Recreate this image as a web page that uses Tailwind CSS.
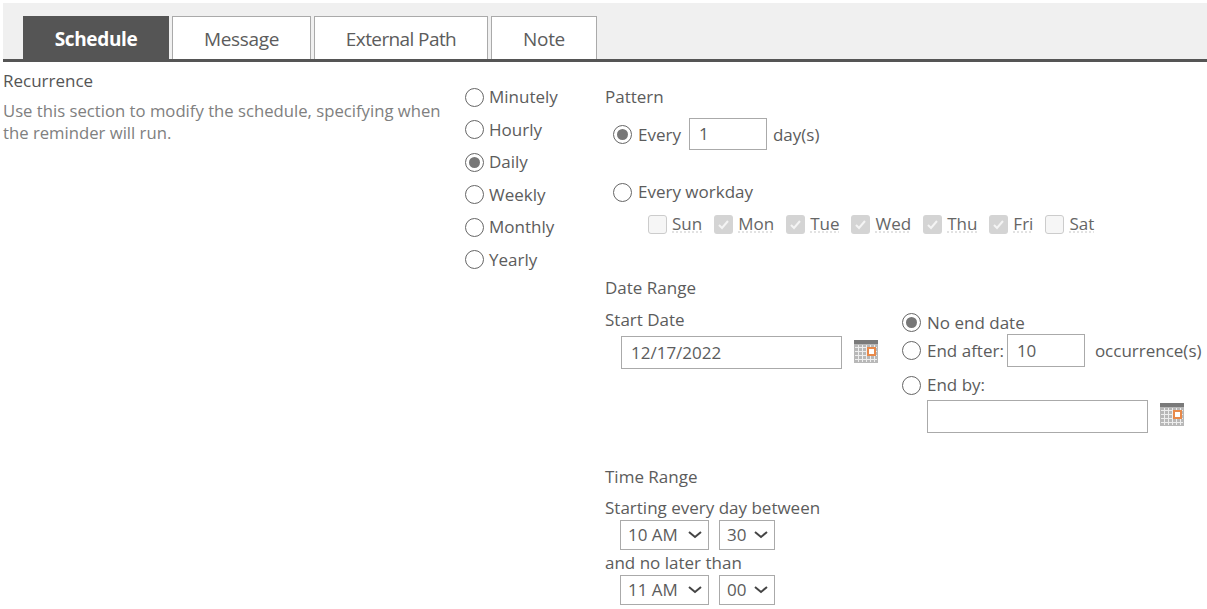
<!DOCTYPE html>
<html lang="en">
  <head>
    <meta charset="UTF-8" />
    <title>Reminder - Schedule</title>
    <script src="https://cdn.jsdelivr.net/npm/@tailwindcss/browser@4"></script>
  </head>
  <body class="bg-white overflow-hidden font-['Open_Sans',sans-serif] text-[17px] text-[#5c5c5c] leading-[24px]">
    <!-- Tabs -->
    <div class="ml-[3px] mt-[3px] h-[59px] bg-[#f0f0f0] border-b-[3px] border-[#555] flex items-end pl-5 gap-[3px] text-[19px] tracking-[-0.35px]">
      <div class="w-[146px] h-[43px] pt-[2px] bg-[#555] text-white font-bold flex items-center justify-center">Schedule</div>
      <div class="w-[139px] h-[43px] pt-[2px] bg-white border border-b-0 border-[#aaa] flex items-center justify-center">Message</div>
      <div class="w-[174px] h-[43px] pt-[2px] bg-white border border-b-0 border-[#aaa] flex items-center justify-center tracking-[-0.6px]">External Path</div>
      <div class="w-[106px] h-[43px] pt-[2px] bg-white border border-b-0 border-[#aaa] flex items-center justify-center">Note</div>
    </div>

    <div class="flex">
      <!-- Section description -->
      <div class="w-[465px] pl-[3px] pt-[7px] shrink-0">
        <h2 class="text-[#555]">Recurrence</h2>
        <p class="mt-[7px] w-[445px] text-[#808080] text-[16.7px] leading-[22px]">Use this section to modify the schedule, specifying when the reminder will run.</p>
      </div>

      <!-- Recurrence type -->
      <div class="w-[140px] shrink-0 pt-[23px] flex flex-col gap-[8.5px]">
        <label class="flex items-center gap-[5px]"><span class="w-[19px] h-[19px] rounded-full border border-[#666]"></span>Minutely</label>
        <label class="flex items-center gap-[5px]"><span class="w-[19px] h-[19px] rounded-full border border-[#666]"></span>Hourly</label>
        <label class="flex items-center gap-[5px]"><span class="w-[19px] h-[19px] rounded-full border border-[#666] flex items-center justify-center"><span class="w-[11px] h-[11px] rounded-full bg-[#777]"></span></span>Daily</label>
        <label class="flex items-center gap-[5px]"><span class="w-[19px] h-[19px] rounded-full border border-[#666]"></span>Weekly</label>
        <label class="flex items-center gap-[5px]"><span class="w-[19px] h-[19px] rounded-full border border-[#666]"></span>Monthly</label>
        <label class="flex items-center gap-[5px]"><span class="w-[19px] h-[19px] rounded-full border border-[#666]"></span>Yearly</label>
      </div>

      <!-- Options -->
      <div class="flex-1 pt-[23px]">
        <h3>Pattern</h3>
        <div class="mt-[9px] ml-2 flex items-center h-[32px]">
          <span class="w-[19px] h-[19px] rounded-full border border-[#666] flex items-center justify-center"><span class="w-[11px] h-[11px] rounded-full bg-[#777]"></span></span>
          <span class="ml-[6px] pt-[1px]">Every</span>
          <span class="ml-[8px] w-[78px] h-[32px] border border-[#aaa] pl-[9px] flex items-center">1</span>
          <span class="ml-[6px] pt-[1px]">day(s)</span>
        </div>
        <div class="mt-[30px] ml-2 flex items-center h-[24px]">
          <span class="w-[19px] h-[19px] rounded-full border border-[#666]"></span>
          <span class="ml-[6px]">Every workday</span>
        </div>
        <div class="mt-[8px] ml-[43px] flex items-center gap-[12px] h-[24px] text-[#666]">
          <label class="flex items-center gap-[5px]"><span class="w-[19px] h-[19px] rounded-[3px] border border-[#ccc] bg-[#f6f6f6]"></span><span class="underline decoration-dotted decoration-[#ddd] underline-offset-[2px]">Sun</span></label>
          <label class="flex items-center gap-[5px]"><span class="w-[19px] h-[19px] rounded-[3px] bg-[#d4d4d4] flex items-center justify-center"><svg width="13" height="13" viewBox="0 0 13 13" fill="none" stroke="#f4f4f4" stroke-width="2"><path d="M2 7l3 3 6-7" /></svg></span><span class="underline decoration-dotted decoration-[#ddd] underline-offset-[2px]">Mon</span></label>
          <label class="flex items-center gap-[5px]"><span class="w-[19px] h-[19px] rounded-[3px] bg-[#d4d4d4] flex items-center justify-center"><svg width="13" height="13" viewBox="0 0 13 13" fill="none" stroke="#f4f4f4" stroke-width="2"><path d="M2 7l3 3 6-7" /></svg></span><span class="underline decoration-dotted decoration-[#ddd] underline-offset-[2px]">Tue</span></label>
          <label class="flex items-center gap-[5px]"><span class="w-[19px] h-[19px] rounded-[3px] bg-[#d4d4d4] flex items-center justify-center"><svg width="13" height="13" viewBox="0 0 13 13" fill="none" stroke="#f4f4f4" stroke-width="2"><path d="M2 7l3 3 6-7" /></svg></span><span class="underline decoration-dotted decoration-[#ddd] underline-offset-[2px]">Wed</span></label>
          <label class="flex items-center gap-[5px]"><span class="w-[19px] h-[19px] rounded-[3px] bg-[#d4d4d4] flex items-center justify-center"><svg width="13" height="13" viewBox="0 0 13 13" fill="none" stroke="#f4f4f4" stroke-width="2"><path d="M2 7l3 3 6-7" /></svg></span><span class="underline decoration-dotted decoration-[#ddd] underline-offset-[2px]">Thu</span></label>
          <label class="flex items-center gap-[5px]"><span class="w-[19px] h-[19px] rounded-[3px] bg-[#d4d4d4] flex items-center justify-center"><svg width="13" height="13" viewBox="0 0 13 13" fill="none" stroke="#f4f4f4" stroke-width="2"><path d="M2 7l3 3 6-7" /></svg></span><span class="underline decoration-dotted decoration-[#ddd] underline-offset-[2px]">Fri</span></label>
          <label class="flex items-center gap-[5px]"><span class="w-[19px] h-[19px] rounded-[3px] border border-[#ccc] bg-[#f6f6f6]"></span><span class="underline decoration-dotted decoration-[#ddd] underline-offset-[2px]">Sat</span></label>
        </div>

        <h3 class="mt-[40px]">Date Range</h3>
        <div class="flex mt-[8px]">
          <div class="w-[297px] shrink-0">
            <div>Start Date</div>
            <div class="ml-4 mt-[4px] flex items-center">
              <span class="w-[221px] h-[33px] border border-[#aaa] pl-[9px] flex items-center">12/17/2022</span>
              <svg class="ml-3 mb-[3px]" width="24" height="23" viewBox="0 0 24 23"><rect width="24" height="23" fill="#b8b8b8" /><rect width="24" height="4" fill="#7a7a7a" /><path d="M1 7.5h22M1 11.5h22M1 15.5h22M1 19.5h22M4.5 5v17M8.5 5v17M12.5 5v17M16.5 5v17M20.5 5v17" stroke="#eee" /><rect x="14" y="8" width="7" height="7" fill="#fff" stroke="#e8894a" stroke-width="2" /></svg>
            </div>
          </div>
          <div class="flex-1 pt-[3px]">
            <div class="flex items-center h-[23px]">
              <span class="w-[19px] h-[19px] rounded-full border border-[#666] flex items-center justify-center"><span class="w-[11px] h-[11px] rounded-full bg-[#777]"></span></span>
              <span class="ml-[6px]">No end date</span>
            </div>
            <div class="flex items-center h-[33px]">
              <span class="w-[19px] h-[19px] rounded-full border border-[#666]"></span>
              <span class="ml-[6px]">End after:</span>
              <span class="ml-[3px] w-[78px] h-[33px] border border-[#aaa] pl-[9px] flex items-center">10</span>
              <span class="ml-[10px]">occurrence(s)</span>
            </div>
            <div class="flex items-center h-[24px] mt-[6px]">
              <span class="w-[19px] h-[19px] rounded-full border border-[#666]"></span>
              <span class="ml-[6px]">End by:</span>
            </div>
            <div class="ml-[25px] mt-[3px] flex items-center">
              <span class="w-[221px] h-[33px] border border-[#aaa]"></span>
              <svg class="ml-3 mb-[5px]" width="24" height="23" viewBox="0 0 24 23"><rect width="24" height="23" fill="#b8b8b8" /><rect width="24" height="4" fill="#7a7a7a" /><path d="M1 7.5h22M1 11.5h22M1 15.5h22M1 19.5h22M4.5 5v17M8.5 5v17M12.5 5v17M16.5 5v17M20.5 5v17" stroke="#eee" /><rect x="14" y="8" width="7" height="7" fill="#fff" stroke="#e8894a" stroke-width="2" /></svg>
            </div>
          </div>
        </div>

        <h3 class="mt-[32px]">Time Range</h3>
        <div class="mt-[7px]">Starting every day between</div>
        <div class="ml-[15px] flex gap-[10px]">
          <span class="w-[89px] h-[30px] border border-[#aaa] pl-[7px] pr-[6px] flex items-center justify-between">10 AM<svg width="14" height="8" viewBox="0 0 14 8" fill="none" stroke="#444" stroke-width="2"><path d="M1 1l6 5 6-5" /></svg></span>
          <span class="w-[56px] h-[30px] border border-[#aaa] pl-[7px] pr-[6px] flex items-center justify-between">30<svg width="14" height="8" viewBox="0 0 14 8" fill="none" stroke="#444" stroke-width="2"><path d="M1 1l6 5 6-5" /></svg></span>
        </div>
        <div class="mt-[1px]">and no later than</div>
        <div class="ml-[15px] flex gap-[10px]">
          <span class="w-[89px] h-[30px] border border-[#aaa] pl-[7px] pr-[6px] flex items-center justify-between">11 AM<svg width="14" height="8" viewBox="0 0 14 8" fill="none" stroke="#444" stroke-width="2"><path d="M1 1l6 5 6-5" /></svg></span>
          <span class="w-[56px] h-[30px] border border-[#aaa] pl-[7px] pr-[6px] flex items-center justify-between">00<svg width="14" height="8" viewBox="0 0 14 8" fill="none" stroke="#444" stroke-width="2"><path d="M1 1l6 5 6-5" /></svg></span>
        </div>
      </div>
    </div>
  </body>
</html>
